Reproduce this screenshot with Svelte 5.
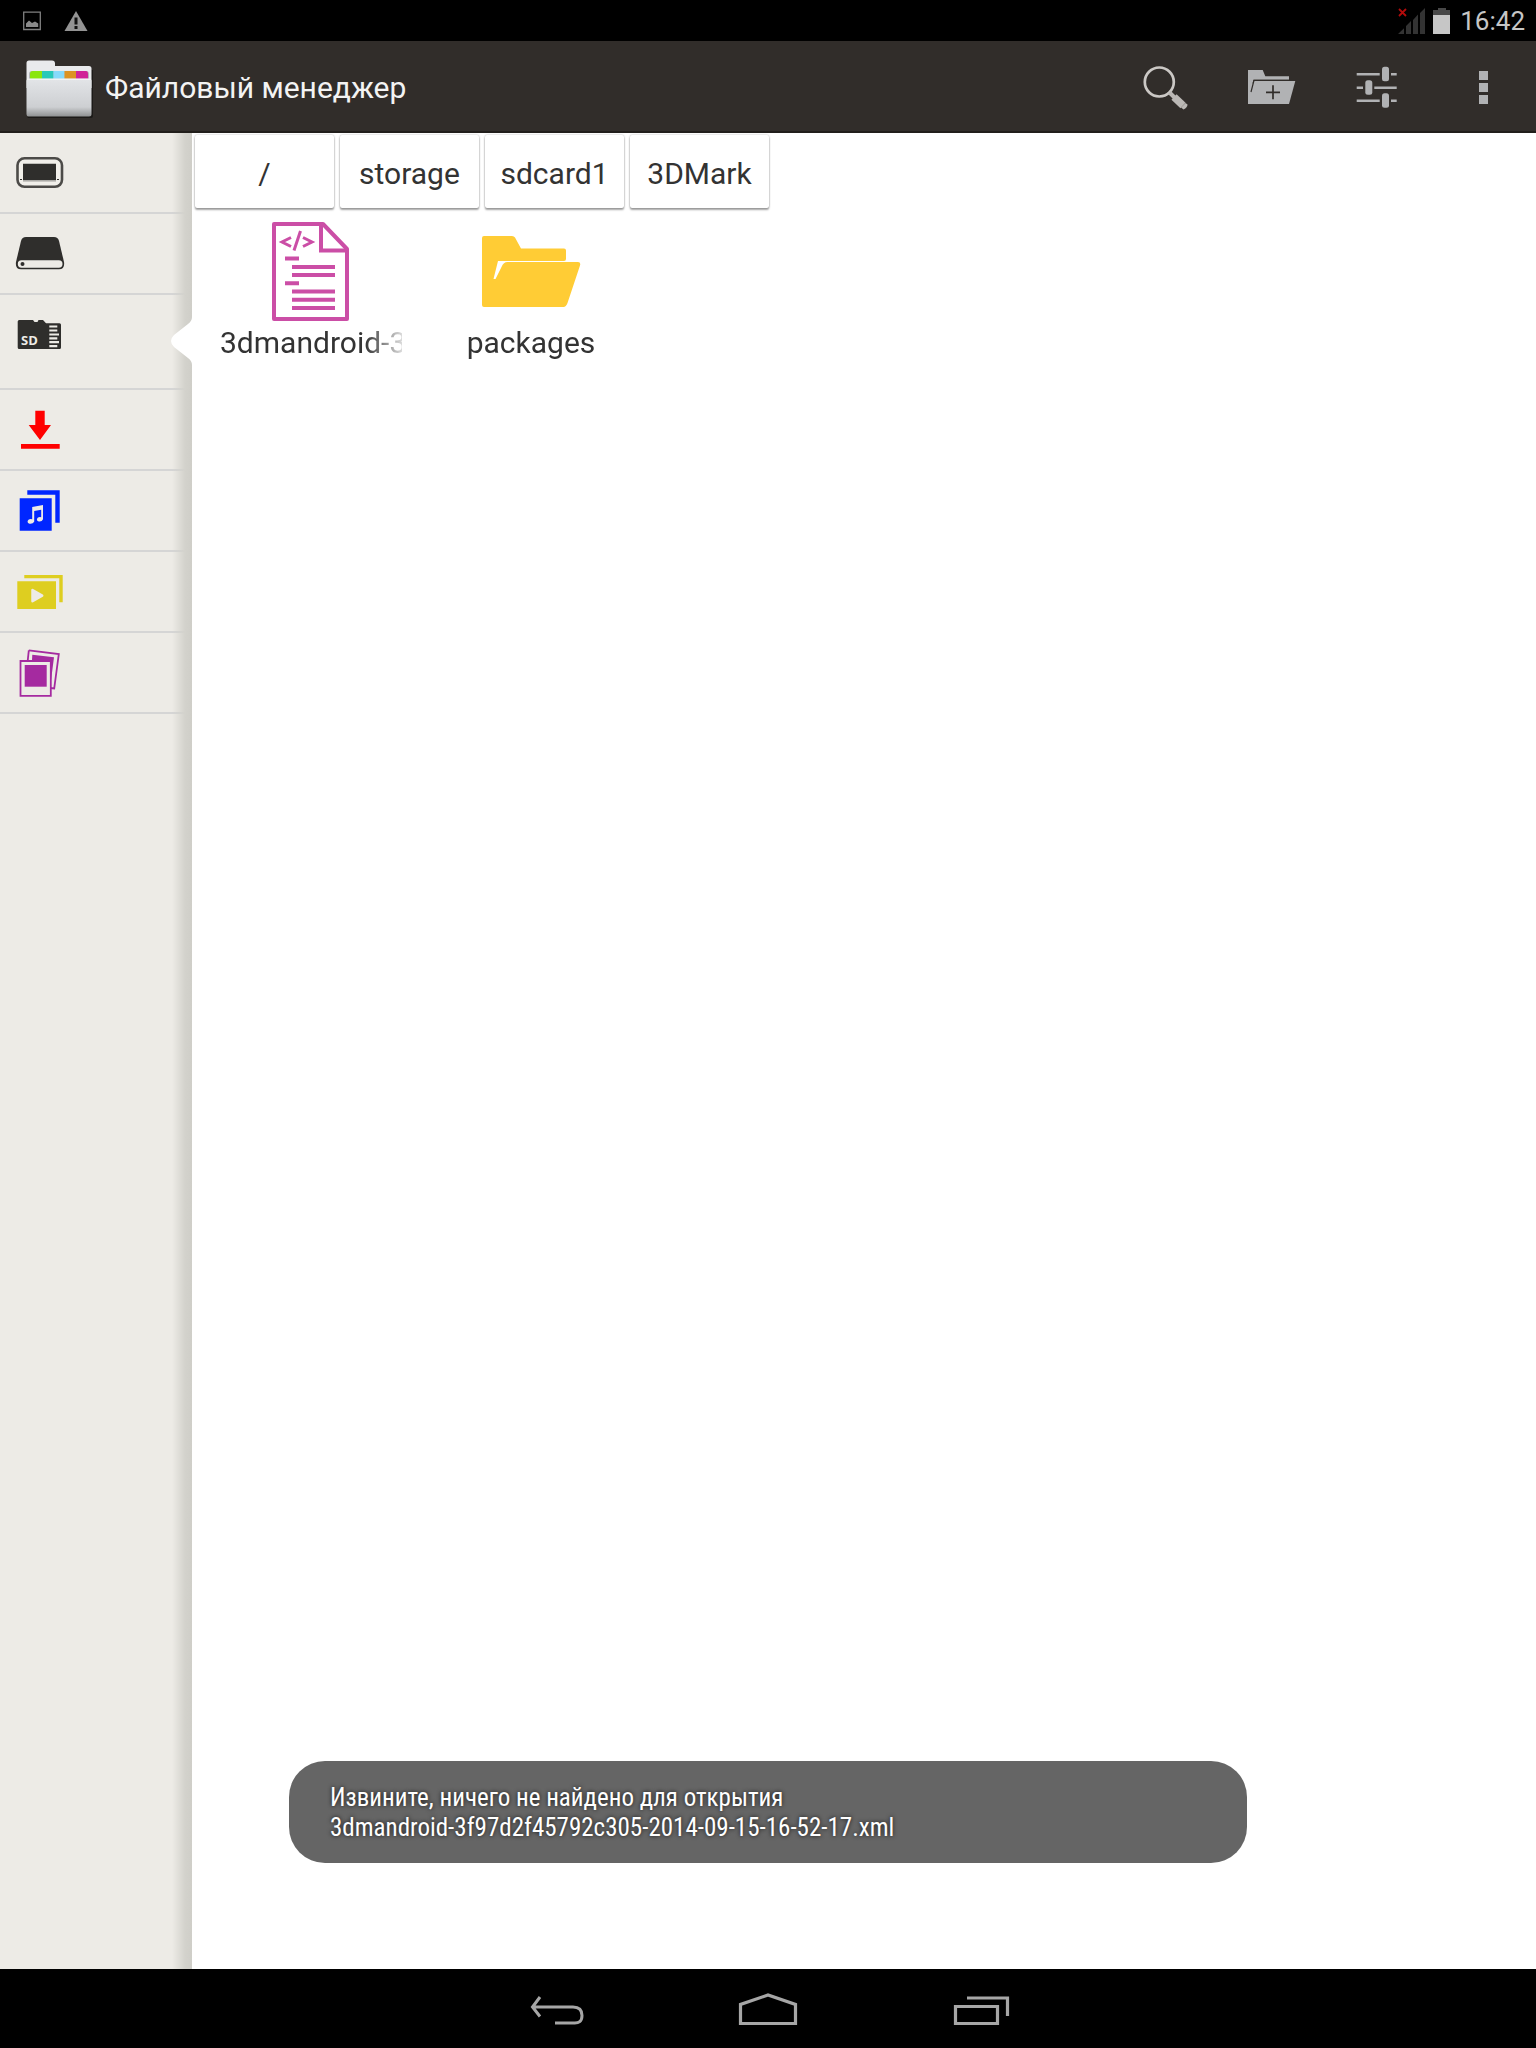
<script lang="ts">
  interface Place {
    id: string;
    label: string;
    color: string;
  }

  const places: Place[] = [
    { id: "device", label: "Устройство", color: "#2f2e2c" },
    { id: "drive", label: "Диск", color: "#2f2e2c" },
    { id: "sd", label: "SD-карта", color: "#2f2e2c" },
    { id: "downloads", label: "Загрузки", color: "#ff0000" },
    { id: "music", label: "Музыка", color: "#0026ff" },
    { id: "video", label: "Видео", color: "#dece20" },
    { id: "photos", label: "Фото", color: "#a52aa0" },
  ];

  const crumbs = ["/", "storage", "sdcard1", "3DMark"];

  const files = [
    { name: "3dmandroid-3f97d2f45792c305-2014-09-15-16-52-17.xml", kind: "xml" },
    { name: "packages", kind: "folder" },
  ];

  // a tile has room for about this many characters before the fade
  const NAME_LENGTH = 12;

  let current = $state("sd");
</script>

<div class="screen">
  <div class="status">
    <svg width="18" height="20" viewBox="0 0 18 20" aria-hidden="true">
      <path d="M.7 1.2h16.6v17.3H.7z" fill="none" stroke="#808080" stroke-width="1.3" />
      <path d="M3 16v-3.500l3-3 3 2.500 3-1.500 3.200 2V16z" fill="#8a8a8a" />
    </svg>
    <svg width="24" height="20" viewBox="0 0 24 20" aria-hidden="true">
      <path d="M12 0 23.500 20H.5z" fill="#939393" />
      <path d="M10.500 6.500h3v7h-3zM10.500 15h3v3h-3z" fill="#111" />
    </svg>
    <span class="spacer"></span>
    <svg width="28" height="26" viewBox="0 0 28 26" aria-hidden="true">
      <path d="M0 26l6-5.700V26zM8 26v-8l5-5v13zM15 26V12l5-5.500V26zM22 26V5l5-5v26z" fill="#333" />
      <path d="M1 1l7 7M8 1 1 8" stroke="#b30b0b" stroke-width="1.800" />
    </svg>
    <svg width="17" height="26" viewBox="0 0 17 26" aria-hidden="true">
      <path d="M5 0h8v2h4v5H0V2h5z" fill="#484848" />
      <path d="M0 7h17v19H0z" fill="#c6c6c6" />
    </svg>
    <time>16:42</time>
  </div>

  <header class="bar">
    <svg class="logo" width="70" height="58" viewBox="0 0 70 58" aria-hidden="true">
      <defs>
        <linearGradient id="face" x1="0" y1="0" x2="0" y2="1">
          <stop offset="0" stop-color="#e3e5e8" />
          <stop offset=".75" stop-color="#cdcfd2" />
          <stop offset="1" stop-color="#8f9192" />
        </linearGradient>
      </defs>
      <path d="M3 60h64q2 0 2-2V12h-2z" fill="#1c1a18" />
      <path d="M2.500 5q0-2.500 2.500-2.500h23q3 0 3 3V8h34q2.500 0 2.500 2.500V30h-65z" fill="#e9eaec" />
      <path d="M5 21v-5q0-3 3-3h54q3 0 3 3v5z" fill="#b5b7b9" />
      <path d="M6 21v-5q0-3 3-3h9v8z" fill="#8be60d" />
      <path d="M18 13h11.500v8H18z" fill="#27c9b8" />
      <path d="M29.500 13h11v8h-11z" fill="#86dafb" />
      <path d="M40.500 13H52v8H40.500z" fill="#dc9322" />
      <path d="M52 13h10q2 0 2 3v5H52z" fill="#d02397" />
      <rect x="2.500" y="20.500" width="65" height="38" rx="2.500" fill="url(#face)" />
      <path d="M3 21.300h64" stroke="#f7f7f7" />
    </svg>
    <h1>Файловый менеджер</h1>
    <button aria-label="Поиск">
      <svg width="48" height="48" viewBox="0 0 48 48">
        <circle cx="18.300" cy="19" r="14.500" fill="none" stroke="#cbc8c5" stroke-width="2.700" />
        <path d="M28.500 29.500l5 5" stroke="#bbb8b5" stroke-width="4" />
        <path d="M33 34l9 8.500" stroke="#bbb8b5" stroke-width="7.500" />
        <path d="M40 44.500l4.500-4.500 2 1.500q0 3-4 5z" fill="#bbb8b5" />
      </svg>
    </button>
    <button aria-label="Новая папка">
      <svg width="48" height="48" viewBox="0 0 48 48">
        <path d="M1 7h14.700l2.600 6.300H42v3.400H6.500L1 36z" fill="#b1b2b4" />
        <path d="M7.300 18h41L42 41H1V26z" fill="#b1b2b4" />
        <path d="M4 29 7 17.300h35" fill="none" stroke="#312d2a" stroke-width="1.200" />
        <path d="M26 22.300v14M19 29.300h14" stroke="#312d2a" stroke-width="1.700" />
      </svg>
    </button>
    <button aria-label="Настройки">
      <svg width="48" height="48" viewBox="0 0 48 48">
        <path d="M3.700 11.300h23M38 11.300h5.700M3.700 24.700H10M21.300 24.700h22.400M3.700 37.700h23M38 37.700h5.700" stroke="#b1b2b4" stroke-width="2.400" />
        <rect x="29" y="3.700" width="7" height="14.500" rx="2.500" fill="#b1b2b4" />
        <rect x="12.300" y="17.200" width="7" height="14.500" rx="2.500" fill="#b1b2b4" />
        <rect x="29" y="30.300" width="7" height="14.500" rx="2.500" fill="#b1b2b4" />
      </svg>
    </button>
    <button aria-label="Ещё">
      <svg width="48" height="48" viewBox="0 0 48 48">
        <path d="M20 8h9v9h-9zM20 20h9v9h-9zM20 32h9v9h-9z" fill="#b1b2b4" />
      </svg>
    </button>
  </header>

  <div class="body">
    <nav class="places" aria-label="Места">
      {#each places as p (p.id)}
        <button
          class="place"
          class:current={p.id === current}
          aria-label={p.label}
          onclick={() => (current = p.id)}
        >
          <svg width="48" height="48" viewBox="0 0 48 48" fill={p.color}>
            {#if p.id === "device"}
              <rect x="1.500" y="9.300" width="44.500" height="28.500" rx="7" fill="#f1efea" stroke={p.color} stroke-opacity=".85" stroke-width="2.600" />
              <path d="M7 14.700h33v16.500H7z" />
              <path d="M4 30.500h2M41 30.500h2" stroke={p.color} />
              <path d="M7 32h33" stroke="#8f8d8a" stroke-width=".8" />
            {:else if p.id === "drive"}
              <path d="M10 7h28q4 0 5 4l5 21q1 7.300-5 7.300H5Q-1 39.300 0 32l5-21q1-4 5-4z" />
              <rect x="1.800" y="30.300" width="44.700" height="7.400" rx="3.700" fill="#edebe6" />
              <circle cx="6.500" cy="34" r="2" />
            {:else if p.id === "sd"}
              <path d="M3.200 9H17l1.500 2h3l1-2H27l3 3.300h13.500q1.500 0 1.500 1.500V36.500q0 1.500-1.500 1.500H3.200q-1.500 0-1.500-1.500v-26Q1.700 9 3.200 9z" />
              <path d="M33.300 15.500h8M33.300 19.500h8M33.300 23.500h9.700M33.300 27.300h8M33.300 31.200h9.700M33.300 35.200h8" stroke="#edebe6" stroke-width="2.200" />
              <text class="sd" x="5" y="34">SD</text>
            {:else if p.id === "downloads"}
              <path d="M19.300 4.700h9.400V19H35L24 34 12.700 19h6.600zM5 38h38.700v4.700H5z" />
            {:else if p.id === "music"}
              <path d="M3.700 11.300h32v32.400h-32zM11.300 3.300h32.400v32.400h-4.400v-28h-28z" />
              <path d="M16.200 20l10.800-2v14.300q-1 2.700-4.300 2.200-3-1-1-3.700 1.500-1.300 3.500-.6v-7.500l-7 1.300v10.700q-1.500 2.500-4.700 2-3.300-1.200-1-4 1.500-1.200 3.700-.5z" fill="#edebe6" />
            {:else if p.id === "video"}
              <path d="M1.300 13.300H40V41H1.300zM8.300 7h38.400v27.300h-3.400v-24h-35z" />
              <path d="M16.500 22v11.200l9.700-5.500z" fill="#edebe6" stroke="#edebe6" stroke-width="2.500" stroke-linejoin="round" />
            {:else}
              <path d="M12.800 1.400 42.800 5 38.200 39.500l-4-.5" fill="none" stroke={p.color} stroke-width="1.800" />
              <path d="M12.800 1.400 11.800 11" stroke={p.color} stroke-width="1.800" />
              <path d="M16.300 5.700 38 8.300 34.800 33H34V11H16z" />
              <path d="M4.500 12h30.300v34.800H4.500z" fill="#edebe6" stroke={p.color} stroke-width="1.800" />
              <path d="M8.700 16h22v21.700h-22z" />
            {/if}
          </svg>
        </button>
      {/each}
    </nav>

    <main>
      <nav class="crumbs" aria-label="Путь">
        {#each crumbs as crumb}
          <button>{crumb}</button>
        {/each}
      </nav>

      <div class="files">
        {#each files as file (file.name)}
          <button class="file">
            {#if file.kind === "xml"}
              <svg width="100" height="100" viewBox="0 0 100 100" aria-hidden="true" fill="none" stroke="#cb4ea6" stroke-width="4">
                <path d="M13 2h49l24 25v70H13z" stroke-linejoin="round" />
                <path d="M60 2v26.500h26" />
                <path d="M30 15.500 21 20l9 4.500M42 15.500l9 4.500-9 4.500" stroke-width="3" />
                <path d="M39.500 9 33 28.500" stroke-width="3" />
                <path d="M24 36.500h14M31 45h43M31 53h43M24 61.300h14M31 69.500h43M31 77.800h43M31 86h43" />
              </svg>
            {:else}
              <svg width="100" height="100" viewBox="0 0 100 100" aria-hidden="true" fill="#ffcc35">
                <path d="M1 16q0-2 2-2h28q2 0 3 1.500L40 26.500h43q2 0 2 2V37q0 2-2 2H17L12.500 57h2l6-12q2-5 6-5H97q3 0 2 3.500L86.500 81q-1.500 4-4 4H3q-2 0-2-2z" />
              </svg>
            {/if}
            <span class="name">{file.name.slice(0, NAME_LENGTH)}</span>
          </button>
        {/each}
      </div>
    </main>
  </div>

  <div class="toast" role="status">
    Извините, ничего не найдено для открытия<br />
    3dmandroid-3f97d2f45792c305-2014-09-15-16-52-17.xml
  </div>

  <footer class="keys">
    <button aria-label="Назад">
      <svg width="60" height="36" viewBox="-4 0 60 36">
        <path d="M10 4 2.500 14 10 23.500M3 14h40q9 0 9 8.500T43 30H25" fill="none" stroke="#a6a6a6" stroke-width="3" />
      </svg>
    </button>
    <button aria-label="Домой">
      <svg width="60" height="36" viewBox="0 0 60 36">
        <path d="M2.500 30.500v-19L30 2l27.500 9.500v19z" fill="none" stroke="#a6a6a6" stroke-width="3.200" />
      </svg>
    </button>
    <button aria-label="Недавние">
      <svg width="60" height="36" viewBox="-2 0 60 36">
        <path d="M3.500 13.500h42v17h-42zM15 5h40.500v18" fill="none" stroke="#a6a6a6" stroke-width="3.200" />
      </svg>
    </button>
  </footer>
</div>

<style>
  :global(body) {
    background: #fff;
  }
  .screen {
    position: relative;
    display: flex;
    flex-direction: column;
    min-height: 100vh;
    font-family: Roboto, "Noto Sans", sans-serif;
    font-size: 30px;
    color: #333;
  }
  button {
    margin: 0;
    padding: 0;
    border: 0;
    background: none;
    color: inherit;
    font: inherit;
    cursor: pointer;
  }
  svg {
    display: block;
    flex: none;
    overflow: visible;
  }
  .status {
    display: flex;
    align-items: center;
    height: 41px;
    padding: 0 11px 0 23px;
    background: #000;
    color: #c6c6c6;
    font-size: 26px;
  }
  .status svg + svg {
    margin-left: 23px;
  }
  .spacer {
    flex: 1;
  }
  .status .spacer + svg + svg {
    margin: 0 10px 0 7px;
  }
  .bar {
    display: flex;
    align-items: center;
    box-sizing: border-box;
    height: 92px;
    padding-top: 2px;
    border-bottom: 2px solid #211e1b;
    background: #312d2a;
  }
  .logo {
    margin: 0 11px 0 24px;
  }
  h1 {
    flex: 1;
    margin: 0;
    color: #f3f3f3;
    font-size: 30px;
    font-weight: 400;
  }
  .bar button {
    display: flex;
    justify-content: center;
    width: 106px;
  }
  .body {
    display: flex;
    flex: 1;
  }
  .places {
    position: relative;
    display: flex;
    flex-direction: column;
    width: 192px;
    background: #edebe6;
  }
  /* shade cast by the file pane */
  .places::after {
    content: "";
    position: absolute;
    inset: 0 0 0 auto;
    width: 20px;
    background: linear-gradient(to right, rgba(207, 206, 200, 0), #d3d2cc 65%, #cfcec8);
    pointer-events: none;
  }
  .place {
    position: relative;
    display: flex;
    align-items: flex-start;
    height: 81px;
    padding: 16px;
    box-sizing: border-box;
    border-bottom: 2px solid #d5d5d5;
  }
  .current {
    height: 95px;
  }
  .current::after {
    content: "";
    position: absolute;
    z-index: 1;
    top: 22px;
    right: 0;
    width: 21px;
    height: 48px;
    background: #fff;
    clip-path: path("M21 0Q21 4 17 7L3 18Q-3 24 3 30L17 41Q21 44 21 48Z");
  }
  .sd {
    fill: #edebe6;
    font: bold 13px "Open Sans", sans-serif;
  }
  main {
    flex: 1;
    min-width: 0;
    padding: 2px 3px;
    background: #fff;
  }
  .crumbs {
    display: flex;
    gap: 6px;
  }
  .crumbs button {
    min-width: 139px;
    height: 73px;
    padding-top: 3px;
    border-radius: 2px;
    box-shadow: 0 0 2px rgba(0, 0, 0, 0.3), 0 2px 2px rgba(0, 0, 0, 0.35);
  }
  .files {
    display: grid;
    grid-template-columns: repeat(auto-fill, 220px);
    padding: 14px 6px;
  }
  .file {
    display: flex;
    flex-direction: column;
    align-items: center;
  }
  .name {
    max-width: 182px;
    overflow: hidden;
    line-height: 42px;
    white-space: nowrap;
    mask-image: linear-gradient(to right, #000 145px, transparent 190px);
    mask-size: 182px 100%;
  }
  .toast {
    position: absolute;
    right: 0;
    bottom: 185px;
    left: 0;
    box-sizing: border-box;
    width: 958px;
    max-width: 90%;
    margin: 0 auto;
    padding: 22px 41px 20px;
    border-radius: 36px;
    background: #656565;
    color: #fff;
    font-family: "Roboto Condensed", Roboto, sans-serif;
    font-size: 25px;
    line-height: 30px;
    text-shadow: 0 0 4px rgba(0, 0, 0, 0.8);
  }
  .keys {
    display: flex;
    justify-content: center;
    gap: 152px;
    box-sizing: border-box;
    height: 79px;
    padding-top: 4px;
    background: #000;
  }
</style>
